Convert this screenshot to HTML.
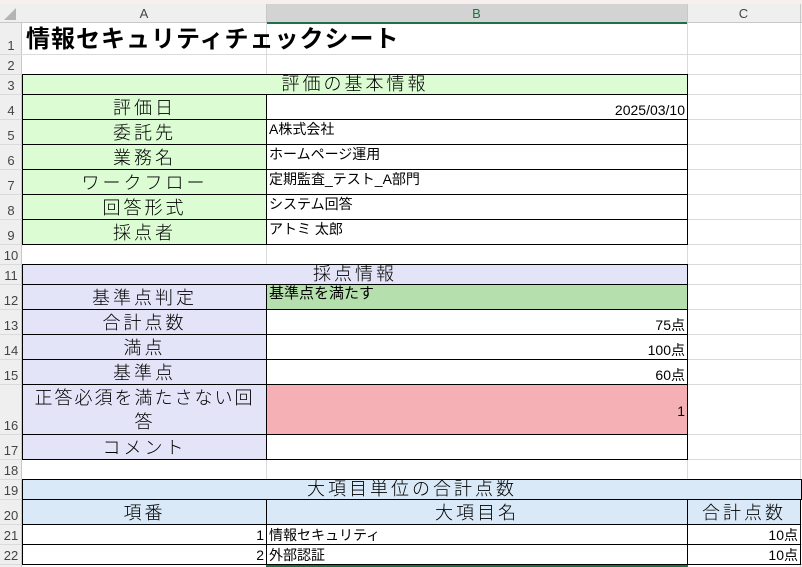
<!DOCTYPE html>
<html><head><meta charset="utf-8"><style>
*{margin:0;padding:0;box-sizing:border-box}
body{width:802px;height:567px;overflow:hidden;background:#fff;font-family:"Liberation Sans","Noto Sans CJK JP",sans-serif;position:relative}
.a{position:absolute}
.c{position:absolute;border:1px solid #000;display:flex;align-items:flex-end;white-space:nowrap;overflow:hidden;color:#000}
.lab{justify-content:center;font-size:18px;font-weight:300;letter-spacing:3px;line-height:22px}
.v{font-size:14px;padding:0 2px;line-height:18px}
.r{justify-content:flex-end}
.gl{position:absolute;background:#dadada}
.rn{position:absolute;left:0;width:22px;font-size:13px;color:#444;text-align:center;display:flex;align-items:flex-end;justify-content:center;padding-bottom:1px}
.g{background:#dcfcd4}.p{background:#e4e4f8}.b{background:#d9e9f7}
</style></head><body>
<div class="a" style="left:0;top:0;width:802px;height:4px;background:#f7eeee"></div>
<div class="a" style="left:0;top:4px;width:802px;height:19px;background:#efefef;border-bottom:1px solid #c8c8c8"></div>
<div class="a" style="left:266px;top:4px;width:421px;height:20px;background:#d3d3d3;border-bottom:2px solid #1e7145"></div>
<div class="a" style="left:22px;top:4px;width:244px;height:19px;font-size:13px;color:#444;text-align:center;line-height:19px">A</div>
<div class="a" style="left:266px;top:4px;width:421px;height:19px;font-size:13px;color:#1e7145;text-align:center;line-height:19px">B</div>
<div class="a" style="left:687px;top:4px;width:113px;height:19px;font-size:13px;color:#444;text-align:center;line-height:19px">C</div>
<div class="a" style="left:266px;top:4px;width:1px;height:19px;background:#c8c8c8"></div>
<div class="a" style="left:687px;top:4px;width:1px;height:19px;background:#c8c8c8"></div>
<div class="a" style="left:800px;top:4px;width:1px;height:19px;background:#c8c8c8"></div>
<div class="a" style="left:0;top:23px;width:22px;height:544px;background:#efefef;border-right:1px solid #c8c8c8"></div>
<div class="a" style="left:4px;top:8px;width:0;height:0;border-left:12px solid transparent;border-bottom:12px solid #b4b4b4"></div>
<div class="gl" style="left:266px;top:23px;width:1px;height:544px"></div>
<div class="gl" style="left:687px;top:23px;width:1px;height:544px"></div>
<div class="gl" style="left:800px;top:23px;width:1px;height:544px"></div>
<div class="gl" style="left:0;top:54px;width:802px;height:1px"></div>
<div class="gl" style="left:0;top:74px;width:802px;height:1px"></div>
<div class="gl" style="left:0;top:94px;width:802px;height:1px"></div>
<div class="gl" style="left:0;top:119px;width:802px;height:1px"></div>
<div class="gl" style="left:0;top:144px;width:802px;height:1px"></div>
<div class="gl" style="left:0;top:169px;width:802px;height:1px"></div>
<div class="gl" style="left:0;top:194px;width:802px;height:1px"></div>
<div class="gl" style="left:0;top:219px;width:802px;height:1px"></div>
<div class="gl" style="left:0;top:244px;width:802px;height:1px"></div>
<div class="gl" style="left:0;top:264px;width:802px;height:1px"></div>
<div class="gl" style="left:0;top:284px;width:802px;height:1px"></div>
<div class="gl" style="left:0;top:309px;width:802px;height:1px"></div>
<div class="gl" style="left:0;top:334px;width:802px;height:1px"></div>
<div class="gl" style="left:0;top:359px;width:802px;height:1px"></div>
<div class="gl" style="left:0;top:384px;width:802px;height:1px"></div>
<div class="gl" style="left:0;top:434px;width:802px;height:1px"></div>
<div class="gl" style="left:0;top:459px;width:802px;height:1px"></div>
<div class="gl" style="left:0;top:479px;width:802px;height:1px"></div>
<div class="gl" style="left:0;top:499px;width:802px;height:1px"></div>
<div class="gl" style="left:0;top:524px;width:802px;height:1px"></div>
<div class="gl" style="left:0;top:544px;width:802px;height:1px"></div>
<div class="gl" style="left:0;top:564px;width:802px;height:1px"></div>
<div class="rn" style="top:23px;height:31px">1</div>
<div class="rn" style="top:54px;height:20px">2</div>
<div class="rn" style="top:74px;height:20px">3</div>
<div class="rn" style="top:94px;height:25px">4</div>
<div class="rn" style="top:119px;height:25px">5</div>
<div class="rn" style="top:144px;height:25px">6</div>
<div class="rn" style="top:169px;height:25px">7</div>
<div class="rn" style="top:194px;height:25px">8</div>
<div class="rn" style="top:219px;height:25px">9</div>
<div class="rn" style="top:244px;height:20px">10</div>
<div class="rn" style="top:264px;height:20px">11</div>
<div class="rn" style="top:284px;height:25px">12</div>
<div class="rn" style="top:309px;height:25px">13</div>
<div class="rn" style="top:334px;height:25px">14</div>
<div class="rn" style="top:359px;height:25px">15</div>
<div class="rn" style="top:384px;height:50px">16</div>
<div class="rn" style="top:434px;height:25px">17</div>
<div class="rn" style="top:459px;height:20px">18</div>
<div class="rn" style="top:479px;height:20px">19</div>
<div class="rn" style="top:499px;height:25px">20</div>
<div class="rn" style="top:524px;height:20px">21</div>
<div class="rn" style="top:544px;height:20px">22</div>
<div class="a" style="left:26px;top:25px;font-size:24px;font-weight:bold;white-space:nowrap;letter-spacing:1px;line-height:30px">情報セキュリティチェックシート</div>
<div class="c g lab" style="left:22px;top:74px;width:666px;height:21px;line-height:19px">評価の基本情報</div>
<div class="c g lab" style="left:22px;top:94px;width:245px;height:26px">評価日</div>
<div class="c v r" style="left:266px;top:94px;width:422px;height:26px">2025/03/10</div>
<div class="c g lab" style="left:22px;top:119px;width:245px;height:26px">委託先</div>
<div class="c v" style="left:266px;top:119px;width:422px;height:26px;align-items:flex-start">A株式会社</div>
<div class="c g lab" style="left:22px;top:144px;width:245px;height:26px">業務名</div>
<div class="c v" style="left:266px;top:144px;width:422px;height:26px;align-items:flex-start">ホームページ運用</div>
<div class="c g lab" style="left:22px;top:169px;width:245px;height:26px">ワークフロー</div>
<div class="c v" style="left:266px;top:169px;width:422px;height:26px;align-items:flex-start">定期監査_テスト_A部門</div>
<div class="c g lab" style="left:22px;top:194px;width:245px;height:26px">回答形式</div>
<div class="c v" style="left:266px;top:194px;width:422px;height:26px;align-items:flex-start">システム回答</div>
<div class="c g lab" style="left:22px;top:219px;width:245px;height:26px">採点者</div>
<div class="c v" style="left:266px;top:219px;width:422px;height:26px;align-items:flex-start">アトミ 太郎</div>
<div class="c p lab" style="left:22px;top:264px;width:666px;height:21px;line-height:19px">採点情報</div>
<div class="c p lab" style="left:22px;top:284px;width:245px;height:26px">基準点判定</div>
<div class="c v" style="left:266px;top:284px;width:422px;height:26px;align-items:flex-start;background:#b5e0ad;font-size:15px">基準点を満たす</div>
<div class="c p lab" style="left:22px;top:309px;width:245px;height:26px">合計点数</div>
<div class="c v r" style="left:266px;top:309px;width:422px;height:26px">75点</div>
<div class="c p lab" style="left:22px;top:334px;width:245px;height:26px">満点</div>
<div class="c v r" style="left:266px;top:334px;width:422px;height:26px">100点</div>
<div class="c p lab" style="left:22px;top:359px;width:245px;height:26px">基準点</div>
<div class="c v r" style="left:266px;top:359px;width:422px;height:26px">60点</div>
<div class="c p lab" style="left:22px;top:384px;width:245px;height:51px;white-space:normal;text-align:center;line-height:24px;padding:0 8px;align-items:center;letter-spacing:2px">正答必須を満たさない回答</div>
<div class="c v r" style="left:266px;top:384px;width:422px;height:51px;background:#f4b0b5;padding-bottom:14px">1</div>
<div class="c p lab" style="left:22px;top:434px;width:245px;height:26px">コメント</div>
<div class="c v" style="left:266px;top:434px;width:422px;height:26px"></div>
<div class="c b lab" style="left:22px;top:479px;width:780px;height:21px;line-height:19px">大項目単位の合計点数</div>
<div class="c b lab" style="left:22px;top:499px;width:245px;height:26px">項番</div>
<div class="c b lab" style="left:266px;top:499px;width:422px;height:26px">大項目名</div>
<div class="c b lab" style="left:687px;top:499px;width:114px;height:26px">合計点数</div>
<div class="c v r" style="left:22px;top:524px;width:245px;height:21px">1</div>
<div class="c v" style="left:266px;top:524px;width:422px;height:21px">情報セキュリティ</div>
<div class="c v r" style="left:687px;top:524px;width:114px;height:21px">10点</div>
<div class="c v r" style="left:22px;top:544px;width:245px;height:21px">2</div>
<div class="c v" style="left:266px;top:544px;width:422px;height:21px">外部認証</div>
<div class="c v r" style="left:687px;top:544px;width:114px;height:21px">10点</div>
<div class="a" style="left:266px;top:565px;width:422px;height:2px;background:#1e7145"></div>
</body></html>
